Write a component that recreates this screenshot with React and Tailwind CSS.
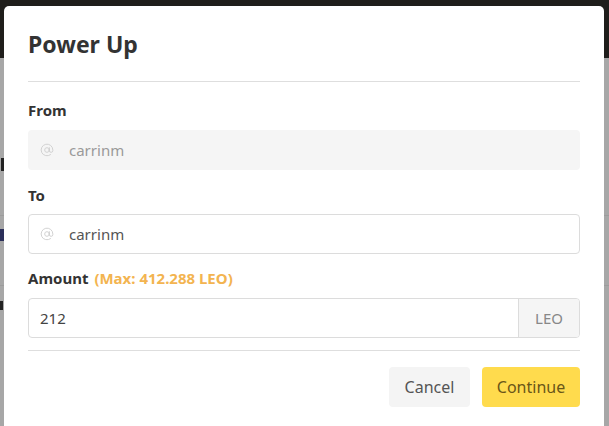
function AtIcon() {
  return (
    <svg width="14" height="14" viewBox="0 0 24 24" fill="none" stroke="#cfcfcf" strokeWidth="1.6" strokeLinecap="round" strokeLinejoin="round">
      <circle cx="12" cy="12" r="4" />
      <path d="M16 8v5a3 3 0 0 0 6 0v-1a10 10 0 1 0-3.92 7.94" />
    </svg>
  );
}

function Label({ children }) {
  return <div className="text-[15px] leading-5 font-bold text-[#333]">{children}</div>;
}

export default function App() {
  return (
    <div className="relative w-[609px] h-[426px] overflow-hidden bg-[#a7a7a7]" style={{ fontFamily: '"Noto Sans", "Open Sans", sans-serif' }}>
      {/* page behind the backdrop */}
      <div className="h-[58px] bg-[#1f1e1b]" />
      <div className="flex flex-col">
        <div className="h-[98px]" />
        <div className="h-[60px] border-b border-[#9c9c9c] pt-[2px] pl-[1px]">
          <div className="w-[3px] h-[13px] bg-[#222]" />
        </div>
        <div className="h-[70px] border-b border-[#9c9c9c] pt-[13px] pl-[0px]">
          <div className="w-[4px] h-[12px] bg-[#2b2f5a]" />
        </div>
        <div className="h-[70px] pt-[15px]">
          <div className="w-[3px] h-[9px] bg-[#222]" />
        </div>
      </div>

      {/* modal */}
      <div className="absolute left-[4px] top-[6px] w-[600px] h-[440px] bg-white rounded-t-[5px] px-6">
        <div className="pt-[22px] pb-[21px] border-b border-[#dedede]">
          <h2 className="text-[23px] leading-8 font-bold text-[#333]">Power Up</h2>
        </div>

        <div className="pt-[18px]">
          <Label>From</Label>
          <div className="mt-[10px] h-10 rounded-[4px] bg-[#f5f5f5] flex items-center pl-[12px]">
            <AtIcon />
            <span className="ml-[15px] text-[15px] text-[#9a9a9a]">carrinm</span>
          </div>

          <div className="mt-[15px]">
            <Label>To</Label>
          </div>
          <div className="mt-[9px] h-10 rounded-[4px] border border-[#dcdcdc] flex items-center pl-[11px]">
            <AtIcon />
            <span className="ml-[15px] text-[15px] text-[#555]">carrinm</span>
          </div>

          <div className="mt-[14px] flex items-baseline gap-[6px]">
            <Label>Amount</Label>
            <span className="text-[15px] leading-5 font-bold text-[#f3b450]">(Max: 412.288 LEO)</span>
          </div>
          <div className="mt-[10px] h-10 rounded-[4px] border border-[#dcdcdc] flex overflow-hidden">
            <div className="flex-1 flex items-center pl-[11px] text-[15px] text-[#444]">212</div>
            <div className="w-[61px] bg-[#f5f5f5] border-l border-[#dcdcdc] flex items-center justify-center text-[15px] text-[#888]">LEO</div>
          </div>

          <div className="mt-[12px] border-t border-[#dedede]" />

          <div className="mt-[16px] flex justify-end gap-3">
            <button className="h-10 w-[81px] rounded-[4px] bg-[#f4f4f4] text-[16px] text-[#555]">Cancel</button>
            <button className="h-10 w-[98px] rounded-[4px] bg-[#ffdb4d] text-[16px] text-[#6a5618]">Continue</button>
          </div>
        </div>
      </div>
    </div>
  );
}
